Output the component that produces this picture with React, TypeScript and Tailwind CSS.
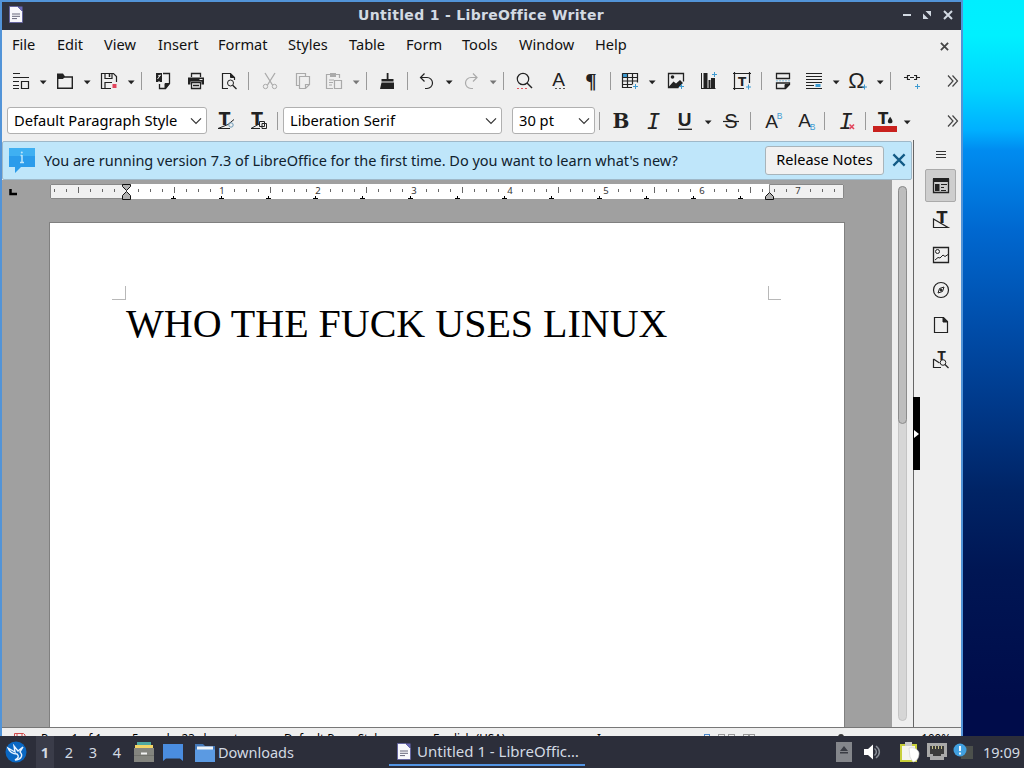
import type { ReactNode } from 'react';
import clsx from 'clsx';

interface IconProps {
  className?: string;
  children: ReactNode;
  size?: number;
}

const Icon = ({ className, children, size = 18 }: IconProps) => (
  <svg
    width={size}
    height={size}
    viewBox={`0 0 ${size} ${size}`}
    fill="none"
    stroke="currentColor"
    className={clsx('shrink-0 overflow-visible', className)}
  >
    {children}
  </svg>
);

// Letter inside a toolbar icon
const Glyph = ({ x, y, className, children }: { x: number; y: number; className: string; children: string }) => (
  <text x={x} y={y} textAnchor="middle" fill="currentColor" stroke="none" className={className}>
    {children}
  </text>
);

const Arrow = ({ className = 'ml-[9px]' }: { className?: string }) => (
  <svg width="8" height="5" viewBox="0 0 8 5" className={clsx('mt-[3px] shrink-0', className)}>
    <path d="M0.800 0.500h6.800L4.200 4.300z" fill="currentColor" />
  </svg>
);

const Sep = ({ className }: { className: string }) => (
  <div className={clsx('h-[18px] w-px shrink-0 bg-[#9a9a9a]', className)} />
);

const Chevron = () => (
  <svg width="12" height="8" viewBox="0 0 12 8" fill="none" stroke="#333" strokeWidth="1.2">
    <path d="M1 1.3l5 5 5-5" />
  </svg>
);

const More = ({ className }: { className: string }) => (
  <svg width="12" height="14" viewBox="0 0 12 14" fill="none" stroke="#444" strokeWidth="1.200" className={clsx('shrink-0', className)}>
    <path d="M1 1.5l5 5.5-5 5.5M5.5 1.5l5 5.5-5 5.5" />
  </svg>
);

const Cross = ({ size, className, width = 2 }: { size: number; className?: string; width?: number }) => (
  <svg width={size} height={size} viewBox="0 0 10 10" fill="none" stroke="currentColor" strokeWidth={width} className={className}>
    <path d="M1 1l8 8M9 1L1 9" />
  </svg>
);

const WriterIcon = ({ className }: { className?: string }) => (
  <svg width="14" height="17" viewBox="0 0 14 17" className={clsx('shrink-0', className)}>
    <path d="M.5.5h8l5 5v11H.5z" fill="#f8f8fc" stroke="#5b5ba0" strokeWidth=".8" />
    <path d="M8.5.5h5v5z" fill="#6a6ab8" />
    <path d="M3 8h8M3 10.3h8M3 12.6h5" stroke="#66667a" strokeWidth="1" />
  </svg>
);

function ComboBox({ value, className }: { value: string; className: string }) {
  return (
    <div
      className={clsx(
        'flex h-[27px] shrink-0 items-center justify-between rounded-[3px] border border-[#b0b0b0] bg-white pl-1.5 pr-[4px] text-[14.700px] leading-[18px] text-black',
        className
      )}
    >
      <span className="whitespace-pre pb-px">{value}</span>
      <Chevron />
    </div>
  );
}

const menuItems = [
  { label: 'File', width: 'w-[45px]' },
  { label: 'Edit', width: 'w-[47px]' },
  { label: 'View', width: 'w-[54px]' },
  { label: 'Insert', width: 'w-[60px]' },
  { label: 'Format', width: 'w-[70px]' },
  { label: 'Styles', width: 'w-[61px]' },
  { label: 'Table', width: 'w-[57px]' },
  { label: 'Form', width: 'w-[56px]' },
  { label: 'Tools', width: 'w-[57px]' },
  { label: 'Window', width: 'w-[76px]' },
  { label: 'Help', width: 'w-[40px]' },
];

function TitleBar() {
  return (
    <div className="flex h-7 shrink-0 items-center bg-[#2f323d] pl-[7px] pr-2 text-[#d3dae3]">
      <WriterIcon className="-mt-1" />
      <div className="flex-1 whitespace-nowrap pb-[2px] pl-[36px] text-center font-['DejaVu_Sans',sans-serif] text-[14px] font-bold tracking-[0.330px]">
        Untitled 1 - LibreOffice Writer
      </div>
      <div className="flex items-center gap-[11px] pb-[2px]">
        <div className="h-[2px] w-[8px] bg-[#d3dae3]" />
        <svg width="10" height="10" viewBox="0 0 10 10" fill="currentColor">
          <path d="M3.5 1H9v5.5zM1 3.5V9h5.5z" />
        </svg>
        <Cross size={10} />
      </div>
    </div>
  );
}

function MenuBar() {
  return (
    <div className="flex h-[30px] shrink-0 items-center pl-[10px] pr-[12px] text-[14.600px]">
      {menuItems.map((item) => (
        <div key={item.label} className={clsx('shrink-0', item.width)}>
          {item.label}
        </div>
      ))}
      <Cross size={9} className="ml-auto mt-[2px] text-[#444]" />
    </div>
  );
}

function StandardToolbar() {
  return (
    <div className="flex h-[42px] shrink-0 items-center text-[#222]">
      <Icon className="ml-[10px]">
        <path d="M1 1.500h7M1 5.500h16M1 9.500h6M1 13.500h6M1 16.500h6M9.500 9.500h7v7h-7z" strokeWidth="1.200" />
      </Icon>
      <Arrow />
      <Icon className="ml-[9px]">
        <path d="M1.700 4v12.300h14.600V5H8" strokeWidth="1.400" />
        <path d="M1 1.500h6l2 3-2 2.500H1z" fill="currentColor" stroke="none" />
      </Icon>
      <Arrow />
      <Icon className="ml-[9px]">
        <path d="M11 16.500H1.500v-15h12l3 3V10M5 1.500v5h7v-5M5 16.500v-6h7" strokeWidth="1.200" />
        <path d="M9.500 2v3" strokeWidth="1.500" />
        <path d="M12.500 12h4v4h-4z" fill="#e2445c" stroke="none" />
      </Icon>
      <Arrow />
      <Sep className="ml-[6px]" />

      <Icon className="ml-[12px]">
        <path d="M9 1.500h6.500v10l-4 5h-6V12" strokeWidth="1.300" />
        <path d="M2 1h6v9H6l-1-1-1 1H2z" fill="currentColor" stroke="none" />
        <path d="M3.500 7l3-4M4 4l2.500-1" stroke="#eee" />
        <path d="M11 16.500v-5h4.500z" fill="currentColor" />
      </Icon>
      <Icon className="ml-[15px]">
        <path d="M4.500 5V1.500h9V5M4.500 10.500h9v6h-9zM6 13.500h6" strokeWidth="1.300" />
        <path d="M1 5.500h16v7h-2.500V9.500h-11v3H1z" fill="currentColor" stroke="none" />
        <path d="M12.500 7.500h3" stroke="#eee" />
      </Icon>
      <Icon className="ml-[15px]">
        <path d="M8 16.500H2.500v-15h8l4 4V8" strokeWidth="1.200" />
        <path d="M10.500 1.500v4h4z" fill="currentColor" />
        <circle cx="10.500" cy="11" r="3" />
        <path d="M12.700 13.200l3.800 3.800" strokeWidth="1.300" />
      </Icon>
      <Sep className="ml-[10px]" />

      <Icon className="ml-[12px] text-[#aaa]">
        <path d="M4 1l7.500 12M14 1L6.500 13" strokeWidth="1.300" />
        <circle cx="4.500" cy="14.500" r="2.200" />
        <circle cx="13.500" cy="14.500" r="2.200" />
      </Icon>
      <Icon className="ml-[15px] text-[#aaa]">
        <path d="M5 13.500H2.500v-12h9V4M5.500 4.500h10v8l-4 4h-6zM11.500 16.500v-4h4" strokeWidth="1.200" />
      </Icon>
      <Icon className="ml-[13px] text-[#aaa]">
        <path d="M5 2.500H1.500v14H8M11 2.500h3.500V6M4 8h5M4 10.500h4M4 13h3M9.500 8.500h7v8h-7z" strokeWidth="1.200" />
        <path d="M5 1h6v4H5z" fill="currentColor" stroke="none" />
      </Icon>
      <Arrow className="ml-[9px] text-[#777]" />
      <Sep className="ml-[6px]" />

      <Icon className="ml-[11px]">
        <path d="M8.700 1h1.800v6h5v2.500h-12V7h5.200zM3.500 10.500h12.500v6.500H2z" fill="currentColor" stroke="none" />
      </Icon>
      <Sep className="ml-[11px]" />
      <Icon className="ml-[10px]">
        <path d="M6.500 1.500l-4 4 4 4M3 5.500h6a5.500 5.500 0 0 1 0 11H7" strokeWidth="1.200" />
      </Icon>
      <Arrow />
      <Icon className="ml-[9px] text-[#aaa]">
        <path d="M11 1.500l4 4-4 4M15 5.500H9a5.500 5.500 0 0 0 0 11h2" strokeWidth="1.200" />
      </Icon>
      <Arrow className="ml-[9px] text-[#777]" />
      <Sep className="ml-[6px]" />

      <Icon className="ml-[11px]">
        <circle cx="8" cy="7" r="5.700" strokeWidth="1.200" />
        <path d="M12 11l5 5" strokeWidth="1.400" />
        <path d="M2 16.500h11" stroke="#e2555f" strokeDasharray="2 2" />
      </Icon>
      <Icon className="ml-[17px]">
        <Glyph x={8.5} y={14} className="font-['Liberation_Sans',sans-serif] text-[19px]">A</Glyph>
        <path d="M5 16.500h11" stroke="#555" strokeDasharray="2 2" />
      </Icon>
      <div className="ml-[14px] w-[18px] text-center font-['Liberation_Serif',serif] text-[21px] font-bold leading-[18px]">¶</div>
      <Sep className="ml-[10px]" />

      <Icon className="ml-[10px]">
        <path d="M1 1h6v5H1z" fill="#3d9ad1" stroke="none" />
        <path d="M1.500 1.500h15v9M11 15.500H1.500v-14M1 5.500h15.500M1 9h15.500M1 12.500h10M6.500 1.500v14M11.500 1.500v11" strokeWidth="1.200" />
        <path d="M14.500 12v5M12 14.500h5" stroke="#3d9ad1" />
      </Icon>
      <Arrow />
      <Icon className="ml-[11px]">
        <path d="M16.500 9.500v-8h-15v14h10" strokeWidth="1.300" />
        <path d="M2 14.500l4.500-5 2.500 2 4-3.500 3 3-4.500 4.500H2z" fill="currentColor" stroke="none" />
        <circle cx="5.500" cy="5" r="1.800" fill="currentColor" stroke="none" />
        <path d="M14.500 12v5M12 14.500h5" stroke="#3d9ad1" />
      </Icon>
      <Icon className="ml-[15px]">
        <path d="M1.500 1v16M2 16.500h13.500" />
        <path d="M3.500 1h4v15h-4zM8.500 8h2v8h-2zM11 6h4v10h-4z" fill="currentColor" stroke="none" />
        <path d="M14.500 0v5M12 2.500h5" stroke="#3d9ad1" />
      </Icon>
      <Icon className="ml-[15px]">
        <path d="M16.500 11V1.500h-15v15H11M0 1.500h2M1.500 0v2M16.500 0v2M16 1.500h2M1.500 16v2M0 16.500h2" strokeWidth="1.200" />
        <Glyph x={9} y={13.5} className="font-['DejaVu_Sans',sans-serif] text-[12px] font-bold">T</Glyph>
        <path d="M15.500 12.500v5M13 15h5" stroke="#3d9ad1" />
      </Icon>
      <Sep className="ml-[10px]" />

      <Icon className="ml-[12px]">
        <path d="M2.500 6.500v-5h13v5zM2.500 11v5.500h9l4-4V11z" strokeWidth="1.300" />
        <path d="M11 16.500v-4h4.500z" fill="currentColor" />
        <path d="M2 8.800h14" stroke="#8ac0dc" strokeDasharray="2 1" />
      </Icon>
      <Icon className="ml-[13px]">
        <path d="M1 1.500h16M1 4.500h16M1 7.500h16M1 10.500h16M1 13.500h8M1 16.500h16" strokeWidth="1.200" />
        <path d="M10.500 12h5v3h-5z" fill="#3d9ad1" stroke="none" />
      </Icon>
      <Arrow />
      <Icon className="ml-[8px]">
        <Glyph x={8.5} y={16} className="font-['Liberation_Sans',sans-serif] text-[22px]">Ω</Glyph>
        <path d="M16.500 12.500v5M14 15h5" stroke="#3d9ad1" />
      </Icon>
      <Arrow className="ml-[10px]" />
      <Sep className="ml-[6px]" />
      <Icon className="ml-[12px]">
        <path d="M1 5.500h3M14 5.500h3M7 5.500h4M7 3.500H4.500v4H7M11 3.500h2.500v4H11" strokeWidth="1.200" />
        <path d="M14.500 12v5M12 14.500h5" stroke="#3d9ad1" />
      </Icon>
      <More className="ml-auto mr-[2px]" />
    </div>
  );
}

function FormattingToolbar() {
  return (
    <div className="flex h-[38px] shrink-0 items-center pb-px text-[#222]">
      <ComboBox value="Default Paragraph Style" className="ml-[5px] w-[200px]" />
      <Icon className="ml-[10px]">
        <Glyph x={7.5} y={13} className="font-['DejaVu_Sans',sans-serif] text-[17px] font-bold">T</Glyph>
        <path d="M1 16.500l10-4 6-5M1 16.500h12" />
        <circle cx="14" cy="13" r="2.200" stroke="#6d9bb8" />
      </Icon>
      <Icon className="ml-[15px]">
        <Glyph x={7} y={13} className="font-['DejaVu_Sans',sans-serif] text-[17px] font-bold">T</Glyph>
        <path d="M1 16.500l9-5M1 16.500h9M9.500 9.500h5v5h-5zM12 11.500h4.500v5H12z" />
      </Icon>
      <Sep className="ml-[9px]" />
      <ComboBox value="Liberation Serif" className="ml-[5px] w-[219px]" />
      <ComboBox value="30 pt" className="ml-[10px] w-[83px]" />
      <Sep className="ml-[4px]" />

      <div className="ml-[12px] w-[18px] text-center font-['DejaVu_Serif',serif] text-[20px] font-bold leading-[18px]">B</div>
      <Icon className="ml-[15px]">
        <Glyph x={8.5} y={17} className="font-['DejaVu_Sans_Mono',monospace] text-[22px] italic">I</Glyph>
      </Icon>
      <Icon className="ml-[13px]">
        <Glyph x={8.5} y={14} className="font-['Liberation_Sans',sans-serif] text-[19px] font-bold">U</Glyph>
        <path d="M2 17.300h14" strokeWidth="1.300" />
      </Icon>
      <Arrow className="ml-[10px]" />
      <Icon className="ml-[10px]">
        <Glyph x={9} y={16} className="font-['Liberation_Sans',sans-serif] text-[20px]">S</Glyph>
        <path d="M1 9.500h16" strokeWidth="1.200" />
      </Icon>
      <Sep className="ml-[10px]" />

      <Icon className="ml-[13px]">
        <Glyph x={7.5} y={16} className="font-['Liberation_Sans',sans-serif] text-[19px]">A</Glyph>
        <Glyph x={15.5} y={6.5} className="fill-[#3d9ad1] font-['Liberation_Sans',sans-serif] text-[8.500px]">B</Glyph>
      </Icon>
      <Icon className="ml-[15px]">
        <Glyph x={7.5} y={15} className="font-['Liberation_Sans',sans-serif] text-[19px]">A</Glyph>
        <Glyph x={15.5} y={17.5} className="fill-[#3d9ad1] font-['Liberation_Sans',sans-serif] text-[8.500px]">B</Glyph>
      </Icon>
      <Sep className="ml-[9px]" />
      <Icon className="ml-[13px]">
        <Glyph x={8} y={17} className="font-['DejaVu_Sans_Mono',monospace] text-[22px] italic">I</Glyph>
        <path d="M11.500 12.500l4.500 4.500M16 12.500L11.500 17" stroke="#e2445c" strokeWidth="1.600" />
      </Icon>
      <Sep className="ml-[9px]" />
      <div className="ml-[7px] flex h-6 w-6 shrink-0 flex-col pt-[1px]">
        <svg width="24" height="16" viewBox="0 0 24 16" fill="none" stroke="currentColor" className="pt-[1px]">
          <Glyph x={10} y={13.5} className="font-['DejaVu_Sans',sans-serif] text-[16px] font-bold">T</Glyph>
          <path d="M17.500 6c4 5 2.500 7 0 7s-4-2 0-7z" fill="currentColor" stroke="none" />
        </svg>
        <div className="h-1.5 bg-[#c9211e]" />
      </div>
      <Arrow className="ml-[6px]" />
      <More className="ml-auto mr-[2px]" />
    </div>
  );
}

function InfoBar() {
  return (
    <div className="flex h-10 shrink-0 bg-[#efefef] pt-[1px]">
      <div className="flex w-[910px] items-center rounded-[2px] border border-[#9fb8c8] bg-[#bfe6fa] pb-px pl-[6px] pr-[5px]">
        <svg width="26" height="27" viewBox="0 0 26 27" className="shrink-0">
          <path d="M0 1h26v19H12l-6 6v-6H0z" fill="#2b9ceb" />
          <path d="M0 1h26v8H0z" fill="#3fb0f2" />
          <path d="M13 8v8M11.500 8.500H13M11 15.500h4" stroke="#bfe6fa" strokeWidth="1.500" />
          <circle cx="12.800" cy="5.500" r="1" fill="#bfe6fa" />
        </svg>
        <span className="ml-[9px] whitespace-nowrap pt-px text-[14.500px] text-[#10222e]">
          You are running version 7.3 of LibreOffice for the first time. Do you want to learn what's new?
        </span>
        <button className="ml-auto h-[29px] w-[119px] whitespace-nowrap rounded-[3px] border border-[#a8b4ba] bg-[#f1f1f1] text-[14.500px] text-black">
          Release Notes
        </button>
        <Cross size={14} width={1.6} className="-mt-px ml-[8px] text-[#125a85]" />
      </div>
    </div>
  );
}

const RULER_ZERO = 76;
const ticks = Array.from({ length: 66 }, (_, i) => i - 6).filter((k) => k * 12 + RULER_ZERO < 792 && k % 8 !== 0);
const tabStops = Array.from({ length: 13 }, (_, i) => Math.round(RULER_ZERO + 47.25 * (i + 1)));

function Ruler() {
  return (
    <div className="flex h-[42px] shrink-0 pl-[7px] pt-[4px]">
      <svg width="8" height="7" viewBox="0 0 8 7" className="mt-[5px] shrink-0">
        <path d="M1.500 0v5H8" fill="none" stroke="#000" strokeWidth="2.500" />
      </svg>
      <svg width="796" height="17" viewBox="0 0 796 17" className="ml-[33px] shrink-0">
        <rect x="0" y="0" width="794" height="15" fill="#fff" />
        <path d="M.5.500h76v14H.5zM719.500.500h74v14h-74z" fill="#f0f0f0" stroke="#888" />
        <g stroke="#666" shapeRendering="crispEdges">
          {ticks.map((k) => (
            <path key={k} d={`M${RULER_ZERO + k * 12 + 0.5} ${k % 4 === 0 ? 3 : 5}v${k % 4 === 0 ? 6 : 3}`} />
          ))}
        </g>
        <g className="font-['Noto_Sans',sans-serif] text-[9.500px]" textAnchor="middle" fill="#333">
          {[1, 2, 3, 4, 5, 6, 7].map((n) => (
            <text key={n} x={RULER_ZERO + n * 96} y="10">
              {n}
            </text>
          ))}
        </g>
        <g stroke="#000" shapeRendering="crispEdges">
          {tabStops.map((x) => (
            <path key={x} d={`M${x - 2} 14.500h5M${x + 0.5} 12v3`} />
          ))}
        </g>
        <g fill="#b0b0b0" stroke="#111">
          <path d="M72.500.5h8v2l-4 4-4-4zM76.500 7.500l4 4v4h-8v-4z" />
          <path d="M719.500 8.500l4 4v3h-8v-3z" />
        </g>
      </svg>
    </div>
  );
}

function DocumentArea() {
  return (
    <div className="flex min-h-0 flex-1">
      <div className="flex w-[890px] flex-col bg-[#a0a0a0]">
        <Ruler />
        <div className="ml-[47px] w-[796px] flex-1 border-l border-r border-t border-[#808080] bg-white pt-[63px]">
          <div className="flex justify-between pl-[62px] pr-[63px]">
            <div className="h-[14px] w-[14px] border-b border-r border-[#b8b8b8]" />
            <div className="h-[14px] w-[13px] border-b border-l border-[#b8b8b8]" />
          </div>
          <p className="ml-[76px] mt-[1px] whitespace-nowrap font-['Liberation_Serif',serif] text-[40px] leading-[46px] text-black">
            WHO THE FUCK USES LINUX
          </p>
        </div>
      </div>
      <div className="flex w-[21px] flex-col items-center bg-[#efefef] pb-[6px] pt-[6px]">
        <div className="w-[9px] flex-1 rounded-full border border-[#c4c4c4] bg-[#d6d6d6]">
          <div className="-ml-px -mt-px h-[238px] w-[9px] rounded-full border border-[#8c8c8c] bg-[#bdbdbd]" />
        </div>
      </div>
    </div>
  );
}

const sidebarIcons = [
  <Icon key="styles">
    <Glyph x={10} y={12} className="font-['DejaVu_Sans',sans-serif] text-[16px] font-bold">T</Glyph>
    <path d="M1.500 8v8.500H16z" strokeWidth="1.200" />
  </Icon>,
  <Icon key="gallery">
    <path d="M1.500 1.500h15v15h-15z" strokeWidth="1.300" />
    <circle cx="5.500" cy="5.500" r="2" />
    <path d="M3 14l3-2.500 2 .5 3-3 2 1.500 3-2" />
  </Icon>,
  <Icon key="navigator">
    <circle cx="9" cy="9" r="7.500" strokeWidth="1.200" />
    <path d="M12 6l-1.500 4.500L6 12l1.500-4.500z" />
    <circle cx="9" cy="9" r="1" fill="currentColor" />
  </Icon>,
  <Icon key="page">
    <path d="M2.500 1.500h9l4 4v11h-13z" strokeWidth="1.200" />
    <path d="M11 1.500v4.500h4.500z" fill="currentColor" />
  </Icon>,
  <Icon key="inspector">
    <Glyph x={9.5} y={9} className="font-['DejaVu_Sans',sans-serif] text-[12px] font-bold">T</Glyph>
    <path d="M1.500 8v8.500H9M1.500 8l6 4" strokeWidth="1.200" />
    <circle cx="11" cy="11.500" r="2.800" />
    <path d="M13 13.500l3.500 3.500" strokeWidth="1.300" />
  </Icon>,
];

function Sidebar() {
  return (
    <div className="relative flex w-[48px] shrink-0 flex-col border-l border-[#666] bg-[#efefef] pl-[11px] text-[#222]">
      <div className="flex h-[29px] w-[31px] items-center justify-center">
        <svg width="10" height="8" viewBox="0 0 10 8" stroke="#333" shapeRendering="crispEdges">
          <path d="M0 .5h10M0 3.500h10M0 6.500h10" />
        </svg>
      </div>
      <div className="flex h-[33px] w-[31px] items-center justify-center rounded-[2px] border border-[#aaa] bg-[#cecece]">
        <Icon>
          <path d="M1.500 2.500h15v13h-15z" strokeWidth="1.300" />
          <path d="M1 1h16v4H1zM3 7h4.500v7H3z" fill="currentColor" stroke="none" />
          <path d="M9 7.500h6M9 10.500h3M9 13.500h5" />
        </Icon>
      </div>
      {sidebarIcons.map((icon, i) => (
        <div key={i} className="flex h-[35px] w-[31px] items-center justify-center">
          {icon}
        </div>
      ))}
      <div className="absolute -left-px top-[257px] flex h-[73px] w-[7px] items-center bg-black">
        <svg width="7" height="8" viewBox="0 0 7 8">
          <path d="M1 0l5 4-5 4z" fill="#fff" />
        </svg>
      </div>
    </div>
  );
}

function StatusBar() {
  return (
    <div className="flex h-[9px] shrink-0 overflow-hidden whitespace-nowrap border-t border-[#777] bg-[#efefef] pl-[12px] pt-[2px] text-[11.700px] leading-4 text-black">
      <Icon size={12} className="mt-[3px] text-[#d04a4a]">
        <path d="M.5.500h9l1.500 1.500v9H.5zM3 .5v4h5v-4" />
      </Icon>
      <div className="ml-[15px] w-[91px]">Page 1 of 1</div>
      <div className="w-[152px]">5 words, 23 characters</div>
      <div className="w-[149px]">Default Page Style</div>
      <div className="w-[164px]">English (USA)</div>
      <div className="w-[107px]">I</div>
      <div className="flex gap-[8px] pt-[4px]">
        <div className="h-2 w-[6px] border border-[#4a86c8]" />
        <div className="flex">
          <div className="h-2 w-[7px] border border-[#999]" />
          <div className="ml-[3px] h-2 w-[7px] border border-[#999]" />
        </div>
        <div className="flex">
          <div className="h-2 w-[6px] border border-[#999]" />
          <div className="h-2 w-[6px] border border-[#999]" />
        </div>
      </div>
      <div className="ml-[83px] mt-[4px] h-2 w-[6px] rounded-full bg-[#333]" />
      <div className="ml-auto mr-[10px]">100%</div>
    </div>
  );
}

function TaskBar() {
  return (
    <div className="flex h-8 shrink-0 items-center bg-[#2c2e3a] text-[14.500px] leading-5 text-[#d3dae3]">
      <svg width="22" height="22" viewBox="0 0 22 22" className="ml-[5px]">
        <circle cx="11" cy="11" r="10.500" fill="#0a67c2" />
        <path d="M3 7l7 4-1-6 4 5 5-4-3 5c4 4 0 8-5 8 4-2 4-4 2-6-3 0-7-1-9-6z" fill="none" stroke="#eaf4ff" strokeWidth="1.400" />
      </svg>
      <div className="ml-[9px] flex h-full w-[18px] items-center justify-center bg-[#3a3c49] font-bold">1</div>
      <div className="ml-[3px] flex">
        {[2, 3, 4].map((n) => (
          <div key={n} className="w-6 text-center">
            {n}
          </div>
        ))}
      </div>
      <svg width="20" height="20" viewBox="0 0 20 20" className="ml-[5px]">
        <path d="M3 0h14v3H3z" fill="#4fa9a2" />
        <path d="M1 3h18v4H1z" fill="#f3d566" />
        <path d="M0 6h20v14H0z" fill="#84857f" />
        <path d="M0 13h20v1H0z" fill="#72736d" />
        <path d="M7 10.500h6v2H7z" fill="#f2f2f2" />
      </svg>
      <svg width="20" height="17" viewBox="0 0 20 17" className="ml-[9px]">
        <path d="M0 0h20v17l-3-2.500H3L0 17z" fill="#4a8de0" />
      </svg>
      <svg width="20" height="19" viewBox="0 0 20 19" className="ml-[12px]">
        <path d="M0 1h8l2 2h10v16H0z" fill="#4478b8" />
        <path d="M2 3.500h16V7H2z" fill="#eef3f8" />
        <path d="M0 6.500h20V19H0z" fill="#5b9ae2" />
      </svg>
      <span className="ml-[3px] w-[75px]">Downloads</span>
      <div className="ml-[96px] flex h-[30px] w-[196px] shrink-0 items-center self-start border-b-2 border-[#5294e2] pl-[8px] pt-[3px] text-[15px]">
        <WriterIcon />
        <span className="ml-[6px] whitespace-nowrap pb-px">Untitled 1 - LibreOffic…</span>
      </div>
      <svg width="16" height="20" viewBox="0 0 16 20" className="ml-auto">
        <path d="M0 0h16v20H0z" fill="#84868b" />
        <path d="M8 4l4 5H4zM4 10h8v1.500H4z" fill="#3a3c44" />
      </svg>
      <svg width="17" height="16" viewBox="0 0 17 16" className="ml-[12px]">
        <path d="M0 5h4l5-4.500v15L4 11H0z" fill="#fff" />
        <path d="M10.500 4.500c2.500 2 2.500 5 0 7M12 2c4.500 3.500 4.500 8.500 0 12" fill="none" stroke="#8a8f98" strokeWidth="1.500" />
      </svg>
      <svg width="20" height="21" viewBox="0 0 20 21" className="ml-[19px]">
        <path d="M0 2h17v18H0z" fill="#c8cf3a" />
        <path d="M2 4h13v14H2z" fill="#f5f5ee" />
        <path d="M5 0h7v4H5z" fill="#c9c9c9" />
        <path d="M9 6c5-1 9 1 10 5 0 5-2 8-6 9l-3-5z" fill="#fff" stroke="#ccc" strokeWidth=".6" />
      </svg>
      <svg width="20" height="18" viewBox="0 0 20 18" className="ml-[7px]">
        <path d="M0 0h20v14h-3v3H3v-3H0z" fill="#a9a9a9" />
        <path d="M3 3h14v8h-3v2H6v-2H3z" fill="#3b3b3b" />
        <path d="M5.500 3v3M8.500 3v3M11.500 3v3M14.500 3v3" stroke="#c9c28a" />
      </svg>
      <svg width="20" height="18" viewBox="0 0 20 18" className="ml-[6px]">
        <path d="M8 3h12v13H8z" fill="#4c504c" />
        <circle cx="7" cy="7" r="6.500" fill="#41a0e0" />
        <path d="M7 3v5M7 9.500v2" stroke="#fff" strokeWidth="1.800" />
      </svg>
      <span className="ml-[10px] mr-[4px] w-[37px]">19:09</span>
    </div>
  );
}

export default function App() {
  return (
    <div className="flex h-[768px] w-[1024px] flex-col overflow-hidden bg-[linear-gradient(180deg,#00eeff_0px,#00f0ff_35px,#00d4ff_90px,#00b0ff_130px,#008cf0_150px,#0068d0_230px,#004ca8_330px,#003888_410px,#002466_490px,#001654_570px,#000c4a_700px)] font-['Noto_Sans',sans-serif]">
      <div className="flex h-[736px] w-[963px] flex-col border-l-2 border-r-2 border-t-2 border-[#5294d8] bg-[#efefef] text-[#111]">
        <TitleBar />
        <MenuBar />
        <StandardToolbar />
        <FormattingToolbar />
        <div className="flex min-h-0 flex-1">
          <div className="flex w-[911px] flex-col">
            <InfoBar />
            <DocumentArea />
          </div>
          <Sidebar />
        </div>
        <StatusBar />
      </div>
      <TaskBar />
    </div>
  );
}
